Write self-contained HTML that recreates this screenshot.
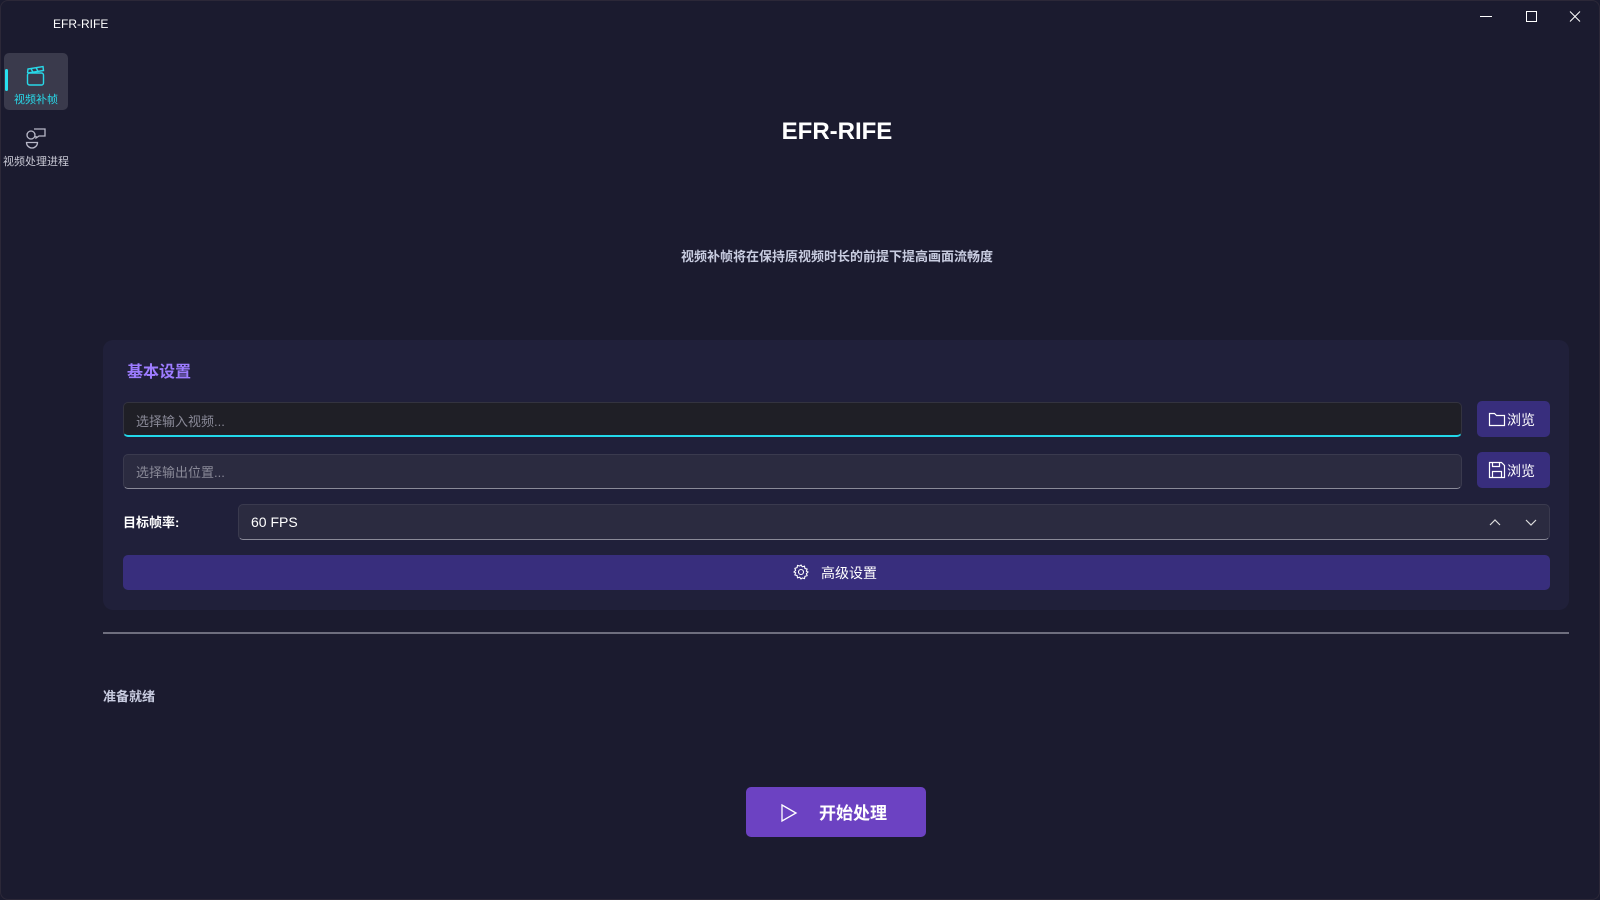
<!DOCTYPE html>
<html><head><meta charset="utf-8"><style>
*{margin:0;padding:0;box-sizing:border-box}
body{width:1600px;height:900px;background:#1b1b2f;font-family:"Liberation Sans","Noto Sans CJK SC",sans-serif;color:#fff;position:relative;overflow:hidden}
.a{position:absolute}
.t{white-space:nowrap}
</style></head><body>
<div class="a" style="left:0;top:0;width:1600px;height:900px;border:1px solid #2c2838;border-radius:8px"></div>
<div class="a t" style="left:53px;top:17px;font-size:12px;color:#fff">EFR-RIFE</div>
<svg class="a" style="left:1478px;top:10px" width="120" height="16"><line x1="2" y1="6.5" x2="14" y2="6.5" stroke="#fff"/><rect x="48.5" y="1.5" width="10" height="10" fill="none" stroke="#fff"/><path d="M92 1.5L102 11.5M102 1.5L92 11.5" stroke="#fff"/></svg>
<div class="a" style="left:4px;top:53px;width:64px;height:57px;background:#3a3a4c;border-radius:5px"></div>
<div class="a" style="left:5px;top:69px;width:3px;height:22px;background:#28e0f0;border-radius:2px"></div>
<svg class="a" style="left:26px;top:65px" width="20" height="22" fill="none" stroke="#28d8e8" stroke-width="1.4"><rect x="1.5" y="8" width="16" height="12" rx="2"/><path d="M1.5 8L2 4 17 1.5 17.5 5.5 2 8M5 3.5l2 4M10 2.5l2 4"/></svg>
<div class="a t" style="left:4px;top:91px;width:64px;text-align:center;font-size:11px;color:#28d8e8">视频补帧</div>
<svg class="a" style="left:25px;top:127px" width="22" height="22" fill="none" stroke="#b8b8c8" stroke-width="1.3"><circle cx="6" cy="8" r="4"/><path d="M1.5 15.5h11a5 5 0 0 1-11 0z"/><path d="M9 2h11v7h-6l-3 2v-2"/></svg>
<div class="a t" style="left:0;top:153px;width:72px;text-align:center;font-size:11px;color:#c8c8d4">视频处理进程</div>
<div class="a t" style="left:0;top:118px;width:1674px;text-align:center;font-size:24px;font-weight:bold">EFR-RIFE</div>
<div class="a t" style="left:0;top:246px;width:1674px;text-align:center;font-size:13px;font-weight:bold;color:#c8cce0">视频补帧将在保持原视频时长的前提下提高画面流畅度</div>
<div class="a" style="left:103px;top:340px;width:1466px;height:270px;background:#20203a;border-radius:10px"></div>
<div class="a t" style="left:127px;top:358px;font-size:16px;color:#9d7cff;font-weight:bold">基本设置</div>
<div class="a" style="left:123px;top:402px;width:1339px;height:35px;background:#1f1f26;border:1px solid #33333f;border-bottom:2px solid #22d8ea;border-radius:5px"></div>
<div class="a t" style="left:136px;top:411px;font-size:13px;color:#8a8a98">选择输入视频...</div>
<div class="a" style="left:123px;top:454px;width:1339px;height:35px;background:#2b2b40;border:1px solid #3a3a4e;border-bottom:1px solid #8a8a98;border-radius:5px"></div>
<div class="a t" style="left:136px;top:462px;font-size:13px;color:#8a8a98">选择输出位置...</div>
<div class="a" style="left:1477px;top:401px;width:73px;height:36px;background:#382e7d;border-radius:5px"></div>
<svg class="a" style="left:1488px;top:410px" width="18" height="18" fill="none" stroke="#fff" stroke-width="1.2"><path d="M1.5 3.5h5l2 2h8v10h-15z"/></svg>
<div class="a t" style="left:1507px;top:410px;font-size:14px">浏览</div>
<div class="a" style="left:1477px;top:452px;width:73px;height:36px;background:#382e7d;border-radius:5px"></div>
<svg class="a" style="left:1488px;top:461px" width="18" height="18" fill="none" stroke="#fff" stroke-width="1.2"><path d="M1.5 1.5h12l3 3v12h-15z M4.5 1.5v4h7v-4 M4.5 16.5v-6h9v6"/></svg>
<div class="a t" style="left:1507px;top:461px;font-size:14px">浏览</div>
<div class="a t" style="left:123px;top:512px;font-size:13px;font-weight:bold">目标帧率:</div>
<div class="a" style="left:238px;top:504px;width:1312px;height:36px;background:#2b2b40;border:1px solid #3a3a4e;border-bottom:1px solid #8a8a98;border-radius:5px"></div>
<div class="a t" style="left:251px;top:514px;font-size:14px">60 FPS</div>
<svg class="a" style="left:1488px;top:515px" width="60" height="14" fill="none" stroke="#ddd" stroke-width="1.2"><path d="M2 10l5-5 5 5M38 5l5 5 5-5"/></svg>
<div class="a" style="left:123px;top:555px;width:1427px;height:35px;background:#382e7d;border-radius:5px"></div>
<svg class="a" style="left:793px;top:564px" width="16" height="16" fill="none" stroke="#fff" stroke-width="1.1"><circle cx="8" cy="8" r="2.5"/><path d="M8 1l1.3 1.8 2.2-.6.4 2.2 2.2.7-.7 2.1L15 8l-1.6 1.6.7 2.1-2.2.7-.4 2.2-2.2-.6L8 15l-1.3-1.8-2.2.6-.4-2.2-2.2-.7.7-2.1L1 8l1.6-1.6-.7-2.1 2.2-.7.4-2.2 2.2.6z"/></svg>
<div class="a t" style="left:821px;top:563px;font-size:14px">高级设置</div>
<div class="a" style="left:103px;top:632px;width:1466px;height:2px;background:#6e6e7e"></div>
<div class="a t" style="left:103px;top:686px;font-size:13px;font-weight:bold;color:#c8cce0">准备就绪</div>
<div class="a" style="left:746px;top:787px;width:180px;height:50px;background:#6c42c2;border-radius:5px"></div>
<svg class="a" style="left:780px;top:803px" width="18" height="20" fill="none" stroke="#fff" stroke-width="1.3"><path d="M2 2l14 8-14 8z"/></svg>
<div class="a t" style="left:819px;top:799px;font-size:17px;font-weight:bold">开始处理</div>
</body></html>
